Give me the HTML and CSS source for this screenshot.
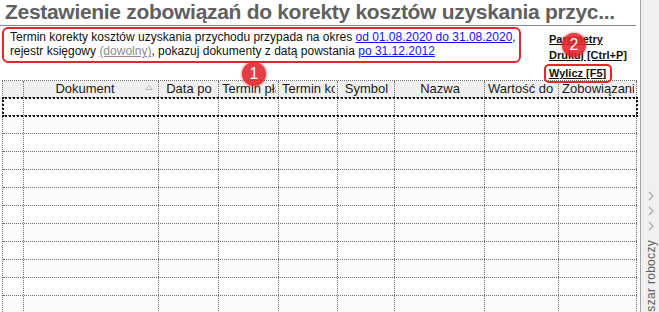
FILE: index.html
```html
<!DOCTYPE html>
<html lang="pl">
<head>
    <meta charset="UTF-8">
    <title>Zestawienie zobowiązań</title>
    <link rel="stylesheet" href="styles.css">
</head>
<body>

<div class="page">
    <div class="main">
        <h1 class="title">Zestawienie zobowiązań do korekty kosztów uzyskania przyc...</h1>

        <div class="top">
            <div class="info">
                Termin korekty kosztów uzyskania przychodu przypada na okres <a class="lnk" href="#">od 01.08.2020 do 31.08.2020</a>,<br>
                rejestr księgowy <a class="lnk gray" href="#">(dowolny)</a>, pokazuj dokumenty z datą powstania <a class="lnk" href="#">po 31.12.2012</a>
            </div>
            <div class="actions">
                <a href="#">Parametry</a>
                <a href="#">Drukuj [Ctrl+P]</a>
                <a href="#" class="marked">Wylicz [F5]</a>
            </div>
        </div>

        <div class="grid">
            <div class="row head">
                <div class="cell"></div>
                <div class="cell sort"><span>Dokument</span>
                    <svg width="8" height="5" viewBox="0 0 8 5"><polygon points="0.5,4.5 4,0.5 7.5,4.5" fill="none" stroke="#b8b8b8" stroke-width="1"/></svg>
                </div>
                <div class="cell"><span>Data po</span></div>
                <div class="cell"><span>Termin płatności</span></div>
                <div class="cell"><span>Termin korekty</span></div>
                <div class="cell"><span>Symbol</span></div>
                <div class="cell"><span>Nazwa</span></div>
                <div class="cell"><span>Wartość do korekty</span></div>
                <div class="cell"><span>Zobowiązanie</span></div>
            </div>
            <div id="rows"></div>
        </div>

        <span class="badge b1">1</span>
        <span class="badge b2">2</span>
    </div>

    <div class="side">
        <svg class="chev" width="6" height="10" viewBox="0 0 6 10"><polyline points="1,1 5,5 1,9" fill="none" stroke="#a8a8a8" stroke-width="1.2"/></svg>
        <svg class="chev" width="6" height="10" viewBox="0 0 6 10"><polyline points="1,1 5,5 1,9" fill="none" stroke="#a8a8a8" stroke-width="1.2"/></svg>
        <svg class="chev" width="6" height="10" viewBox="0 0 6 10"><polyline points="1,1 5,5 1,9" fill="none" stroke="#a8a8a8" stroke-width="1.2"/></svg>
        <div class="side-label">Obszar roboczy</div>
    </div>
</div>

<script>
    let rows = document.getElementById('rows')
    for (let i = 0; i < 12; i++) {
        let row = document.createElement('div')
        row.className = 'row'
        if (i == 0) row.classList.add('current')
        for (let c = 0; c < 9; c++) {
            let cell = document.createElement('div')
            cell.className = 'cell'
            row.appendChild(cell)
        }
        rows.appendChild(row)
    }
</script>

</body>
</html>
```

FILE: styles.css
```css
* {
    margin: 0;
    padding: 0;
    box-sizing: border-box;
}

body {
    background-color: #fff;
    font-family: "Liberation Sans", Arial, sans-serif;
    color: #000;
    overflow: hidden;
    height: 312px;
}

.page {
    display: flex;
    height: 312px;
    overflow: hidden;
}

.main {
    position: relative;
    width: 640px;
    flex: none;
}

.title {
    width: 636px;
    height: 26px;
    padding-left: 5px;
    font-size: 21px;
    line-height: 24px;
    font-weight: bold;
    letter-spacing: -0.3px;
    color: #606060;
    white-space: nowrap;
    overflow: hidden;
    border-bottom: 1px solid #8a8a8a;
}

.top {
    display: flex;
    height: 54px;
}

.info {
    margin: 1px 0 0 2px;
    width: 519px;
    height: 36px;
    padding: 1px 0 0 6px;
    border: 2px solid #e5262b;
    border-radius: 6px;
    font-size: 12px;
    line-height: 14px;
    color: #111;
    white-space: nowrap;
}

.lnk {
    color: #1010ff;
}

.lnk.gray {
    color: #8c8c8c;
}

.actions {
    display: flex;
    flex-direction: column;
    align-items: flex-start;
    margin-left: 23px;
    padding-top: 5px;
}

.actions a {
    font-size: 11px;
    line-height: 16px;
    font-weight: bold;
    color: #111;
    padding-left: 5px;
    white-space: nowrap;
}

.actions a.marked {
    padding: 0 4px 0 3px;
    margin-top: 1px;
    line-height: 15px;
    border: 2px solid #e5262b;
    border-radius: 5px;
}

.grid {
    margin-left: 2px;
    width: 635px;
    border-top: 1px dotted #6a6a6a;
    border-left: 1px dotted #6a6a6a;
}

.row {
    display: grid;
    grid-template-columns: 21px 135px 60px 60px 59px 57px 90px 74px 78px;
    height: 18px;
    border-bottom: 1px dotted #6a6a6a;
}

.row:nth-child(even) {
    background-color: #fbfbfb;
}

.row.head {
    height: 17px;
    background-color: #efefef;
}

.row.current {
    outline: 2px dotted #111;
    outline-offset: -1px;
}

.cell {
    border-right: 1px dotted #6a6a6a;
    font-size: 13px;
    line-height: 16px;
    color: #1a1a1a;
    text-align: center;
    white-space: nowrap;
    overflow: hidden;
}

.cell span {
    display: block;
    margin: 0 2px 0 3px;
    overflow: hidden;
}

.cell.sort {
    display: flex;
    align-items: center;
}

.cell.sort span {
    flex: 1;
}

.cell.sort svg {
    margin: 0 5px 3px 0;
}

.badge {
    position: absolute;
    width: 24px;
    height: 24px;
    border-radius: 50%;
    background-color: #e2232a;
    box-shadow: 0 0 2px 1px rgba(230, 40, 45, 0.45);
    color: #fff;
    font-size: 16px;
    line-height: 24px;
    text-align: center;
    opacity: 0.88;
}

.b1 {
    left: 242px;
    top: 62px;
}

.b2 {
    left: 562px;
    top: 33px;
}

.side {
    flex: 1;
    display: flex;
    flex-direction: column;
    align-items: center;
    justify-content: flex-end;
    background-color: #f0f0f0;
    border-left: 1px solid #a4a4a4;
    padding-left: 1px;
}

.chev {
    margin-bottom: 5px;
}

.side-label {
    margin-top: 4px;
    margin-bottom: -16px;
    writing-mode: vertical-rl;
    transform: rotate(180deg);
    font-size: 12px;
    color: #606060;
    letter-spacing: 0.3px;
    white-space: nowrap;
}
```
